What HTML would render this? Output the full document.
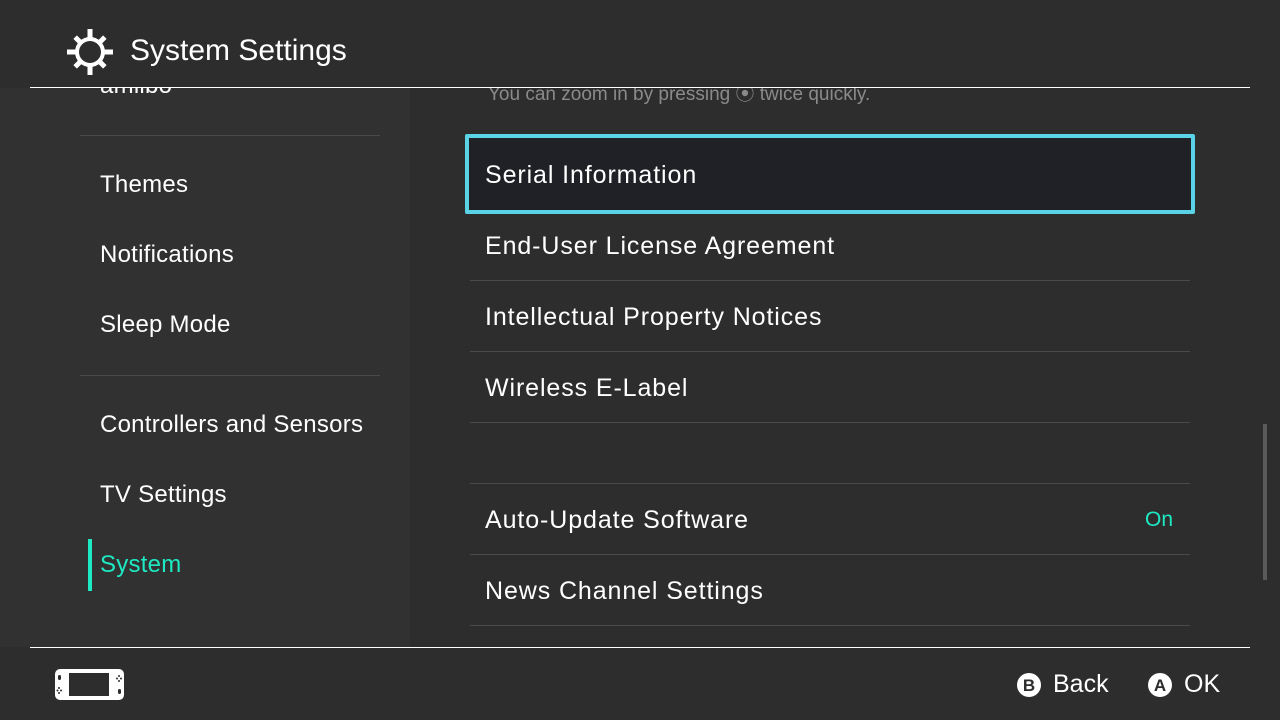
<!DOCTYPE html><html><head><style>
body{margin:0;width:1280px;height:720px;background:#2d2d2d;font-family:"Liberation Sans",sans-serif;color:#fff;position:relative;overflow:hidden}
.a{position:absolute;white-space:nowrap}
.l{font-size:24px;letter-spacing:0.25px}
.r{font-size:25px;letter-spacing:0.9px}
.hr{position:absolute;height:1px;background:#4a4a4a}
</style></head><body>
<div class="a" style="left:0;top:88px;width:410px;height:559px;background:#313131"></div>
<div class="a l" style="left:100px;top:72px;">amiibo</div>
<div class="a" style="left:488px;top:79px;font-size:19px;color:#8a8a8a">You can zoom in by pressing ⦿ twice quickly.</div>
<div class="a" style="left:0;top:0;width:1280px;height:87px;background:#2d2d2d"></div>
<svg class="a" style="left:66px;top:28px" width="48" height="48" viewBox="0 0 48 48"><g fill="#fff"><rect x="21.5" y="1" width="5" height="46"/><rect x="1" y="21.5" width="46" height="5"/><rect x="21.5" y="3" width="5" height="42" transform="rotate(45 24 24)"/><rect x="21.5" y="3" width="5" height="42" transform="rotate(-45 24 24)"/></g><circle cx="24" cy="24" r="15" fill="#fff"/><circle cx="24" cy="24" r="11" fill="#2d2d2d"/></svg>
<div class="a" style="left:130px;top:34px;font-size:30px">System Settings</div>
<div class="a" style="left:30px;top:87px;width:1220px;height:1px;background:#fff"></div>
<div class="hr" style="left:80px;top:135px;width:300px"></div>
<div class="a l" style="left:100px;top:171px">Themes</div>
<div class="a l" style="left:100px;top:241px">Notifications</div>
<div class="a l" style="left:100px;top:311px">Sleep Mode</div>
<div class="hr" style="left:80px;top:375px;width:300px"></div>
<div class="a l" style="left:100px;top:411px">Controllers and Sensors</div>
<div class="a l" style="left:100px;top:481px">TV Settings</div>
<div class="a" style="left:88px;top:539px;width:4px;height:52px;background:#1de9c3"></div>
<div class="a l" style="left:100px;top:551px;color:#1de9c3">System</div>
<div class="a" style="left:465px;top:134px;width:722px;height:72px;border:4px solid #5bd3e6;border-radius:2px;background:#1f2126"></div>
<div class="a r" style="left:485px;top:161px">Serial Information</div>
<div class="hr" style="left:470px;top:280px;width:720px"></div>
<div class="a r" style="left:485px;top:232px">End-User License Agreement</div>
<div class="hr" style="left:470px;top:351px;width:720px"></div>
<div class="a r" style="left:485px;top:303px">Intellectual Property Notices</div>
<div class="hr" style="left:470px;top:422px;width:720px"></div>
<div class="a r" style="left:485px;top:374px">Wireless E-Label</div>
<div class="hr" style="left:470px;top:483px;width:720px"></div>
<div class="a r" style="left:485px;top:506px">Auto-Update Software</div>
<div class="a" style="left:1145px;top:508px;font-size:21px;color:#1de9c3">On</div>
<div class="hr" style="left:470px;top:554px;width:720px"></div>
<div class="a r" style="left:485px;top:577px">News Channel Settings</div>
<div class="hr" style="left:470px;top:625px;width:720px"></div>
<div class="a" style="left:1263px;top:424px;width:4px;height:156px;background:#5a5a5a"></div>
<div class="a" style="left:30px;top:647px;width:1220px;height:1px;background:#fff"></div>
<svg class="a" style="left:55px;top:669px" width="69" height="31" viewBox="0 0 69 31"><rect x="0" y="0" width="69" height="31" rx="5" fill="#fff"/><rect x="14" y="4" width="40" height="23" fill="#2d2d2d"/><g fill="#2d2d2d"><rect x="3" y="6" width="3" height="5" rx="1.5"/><rect x="63" y="20" width="3" height="5" rx="1.5"/><circle cx="4" cy="19" r="1"/><circle cx="4" cy="24" r="1"/><circle cx="2.5" cy="21.5" r="1"/><circle cx="6" cy="21.5" r="1"/><circle cx="64" cy="7" r="1"/><circle cx="64" cy="12" r="1"/><circle cx="62" cy="9.5" r="1"/><circle cx="66" cy="9.5" r="1"/></g></svg>
<svg class="a" style="left:1016px;top:672px" width="26" height="26"><circle cx="13" cy="13" r="12" fill="#fff"/><text x="13" y="19" text-anchor="middle" font-size="17" font-weight="bold" font-family="Liberation Sans" fill="#2d2d2d">B</text></svg>
<div class="a" style="left:1053px;top:670px;font-size:25px">Back</div>
<svg class="a" style="left:1147px;top:672px" width="26" height="26"><circle cx="13" cy="13" r="12" fill="#fff"/><text x="13" y="19" text-anchor="middle" font-size="17" font-weight="bold" font-family="Liberation Sans" fill="#2d2d2d">A</text></svg>
<div class="a" style="left:1184px;top:670px;font-size:25px">OK</div>
</body></html>
